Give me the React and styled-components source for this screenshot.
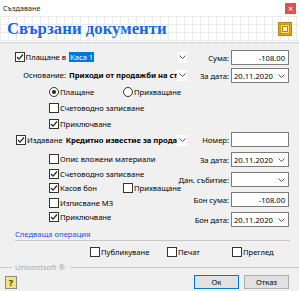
import React from 'react';
import styled, { createGlobalStyle } from 'styled-components';

const GlobalStyle = createGlobalStyle`
  html, body {
    margin: 0;
    padding: 0;
    background: #f0f0f0;
  }
  body {
    font-family: "Noto Sans", "Liberation Sans", sans-serif;
    font-size: 7.6px;
    color: #000;
  }
`;

const Chevron = () => (
  <svg width="7" height="4" viewBox="0 0 7 4">
    <path d="M0.5 0.5 L3.5 3.5 L6.5 0.5" fill="none" stroke="#555" strokeWidth="1" />
  </svg>
);

const Check = ({ checked }) => (
  <CheckBox>
    {checked && (
      <svg width="8" height="8" viewBox="0 0 8 8">
        <path d="M1 4 L3 6.2 L7 1.5" fill="none" stroke="#222" strokeWidth="1.2" />
      </svg>
    )}
  </CheckBox>
);

const CheckItem = ({ checked, children }) => (
  <Item>
    <Check checked={checked} />
    <span>{children}</span>
  </Item>
);

const RadioItem = ({ checked, children }) => (
  <Item>
    <Radio $checked={checked} />
    <span>{children}</span>
  </Item>
);

const DateField = ({ value }) => (
  <Field>
    <span>{value}</span>
    <Chevron />
  </Field>
);

const App = () => {
  return (
    <>
      <GlobalStyle />
      <Window>
        <TitleBar>
          <span>Създаване</span>
          <CloseButton>×</CloseButton>
        </TitleBar>

        <Header>
          <h1>Свързани документи</h1>
          <svg width="14" height="14" viewBox="0 0 14 14">
            <rect x="0.5" y="0.5" width="13" height="13" fill="#dca812" stroke="#b8860b" />
            <rect x="2.5" y="2.5" width="9" height="9" fill="#f7df80" stroke="#c9960c" />
            <rect x="4.5" y="4.5" width="5" height="5" fill="#fff3c0" stroke="#b8860b" />
          </svg>
        </Header>

        <Body>
          <Section>
            <Column>
              <FormGrid>
                <RowLabel>
                  <CheckItem checked>Плащане в</CheckItem>
                </RowLabel>
                <Combo>
                  <ComboText>
                    <Selected>Каса 1</Selected>
                  </ComboText>
                  <ArrowBox>
                    <Chevron />
                  </ArrowBox>
                </Combo>
                <RowLabel>Основание:</RowLabel>
                <Combo>
                  <ComboText $bold>Приходи от продажби на стоки</ComboText>
                  <ArrowBox>
                    <Chevron />
                  </ArrowBox>
                </Combo>
              </FormGrid>
              <Indented $h={16} $top={2}>
                <RadioItem checked>Плащане</RadioItem>
                <RadioItem>Прихващане</RadioItem>
              </Indented>
              <Indented $h={16}>
                <CheckItem>Счетоводно записване</CheckItem>
              </Indented>
              <Indented $h={16}>
                <CheckItem checked>Приключване</CheckItem>
              </Indented>
            </Column>
            <FieldGrid>
              <FieldLabel>Сума:</FieldLabel>
              <Field $right>-108.00</Field>
              <FieldLabel>За дата:</FieldLabel>
              <DateField value="20.11.2020" />
            </FieldGrid>
          </Section>

          <Section>
            <Column>
              <IssueRow>
                <CheckItem checked>Издаване</CheckItem>
                <Combo>
                  <ComboText $bold>Кредитно известие за продажба</ComboText>
                  <ArrowBox>
                    <Chevron />
                  </ArrowBox>
                </Combo>
              </IssueRow>
              <Indented $h={15}>
                <CheckItem>Опис вложени материали</CheckItem>
              </Indented>
              <Indented $h={15}>
                <CheckItem checked>Счетоводно записване</CheckItem>
              </Indented>
              <Indented $h={14}>
                <CheckItem checked>Касов бон</CheckItem>
                <CheckItem>Прихващане</CheckItem>
              </Indented>
              <Indented $h={15}>
                <CheckItem>Изписване МЗ</CheckItem>
              </Indented>
              <Indented $h={14}>
                <CheckItem checked>Приключване</CheckItem>
              </Indented>
            </Column>
            <FieldGrid $gap={5}>
              <FieldLabel>Номер:</FieldLabel>
              <Field />
              <FieldLabel>За дата:</FieldLabel>
              <DateField value="20.11.2020" />
              <FieldLabel>Дан. събитие:</FieldLabel>
              <DateField value="" />
              <FieldLabel>Бон сума:</FieldLabel>
              <Field $right>-108.00</Field>
              <FieldLabel>Бон дата:</FieldLabel>
              <DateField value="20.11.2020" />
            </FieldGrid>
          </Section>

          <NextOperation>Следваща операция</NextOperation>

          <Options>
            <CheckItem>Публикуване</CheckItem>
            <CheckItem>Печат</CheckItem>
            <CheckItem>Преглед</CheckItem>
          </Options>
        </Body>

        <Brand>Unicontsoft ®</Brand>

        <Footer>
          <HelpButton>?</HelpButton>
          <Button $primary>Ок</Button>
          <Button>Отказ</Button>
        </Footer>
      </Window>
    </>
  );
};

export default App;

const Window = styled.div`
  width: 299px;
  height: 291px;
  background: #f0f0f0;
  display: flex;
  flex-direction: column;
  overflow: hidden;
`;

const TitleBar = styled.div`
  height: 16px;
  flex: none;
  background: #fff;
  display: flex;
  align-items: center;
  justify-content: space-between;
  padding: 0 3px;
  font-size: 7.2px;
  color: #222;
`;

const CloseButton = styled.span`
  width: 11px;
  height: 11px;
  background: #d9534f;
  color: #fff;
  font-size: 9px;
  line-height: 11px;
  text-align: center;
`;

const Header = styled.div`
  height: 26px;
  flex: none;
  display: flex;
  align-items: center;
  justify-content: space-between;
  padding: 0 7px;
  background-color: #fff;
  background-image: linear-gradient(#ececec 1px, transparent 1px),
    linear-gradient(90deg, #ececec 1px, transparent 1px);
  background-size: 8px 8px;
  border-bottom: 1px solid #d4d4d4;

  h1 {
    margin: 0;
    font-family: "Liberation Serif", serif;
    font-weight: 700;
    font-size: 16.8px;
    color: #1868de;
  }
`;

const Body = styled.div`
  padding-top: 7px;
  display: flex;
  flex-direction: column;
`;

const Section = styled.div`
  display: grid;
  grid-template-columns: 188px 1fr;
  padding-right: 10px;
`;

const Column = styled.div`
  display: flex;
  flex-direction: column;
  padding-right: 1px;
`;

const FormGrid = styled.div`
  display: grid;
  grid-template-columns: 58px 1fr;
  grid-auto-rows: 14px;
  column-gap: 2px;
  row-gap: 4px;
  padding-left: 8px;
`;

const RowLabel = styled.div`
  display: flex;
  align-items: center;
  justify-content: flex-end;
  white-space: nowrap;
`;

const Combo = styled.div`
  flex: 1;
  min-width: 0;
  height: 14px;
  display: flex;
  align-items: center;
`;

const ComboText = styled.div`
  flex: 1;
  overflow: hidden;
  white-space: nowrap;
  font-weight: ${(p) => (p.$bold ? 700 : 400)};
  padding-left: 1px;
`;

const Selected = styled.span`
  background: #0078d7;
  color: #fff;
  padding: 1px 1px;
`;

const ArrowBox = styled.div`
  width: 10px;
  height: 11px;
  background: #fff;
  display: flex;
  align-items: center;
  justify-content: center;
  flex: none;
`;

const Indented = styled.div`
  height: ${(p) => p.$h}px;
  margin-top: ${(p) => p.$top || 0}px;
  display: grid;
  grid-template-columns: 74px auto;
  align-items: center;
  padding-left: 49px;
`;

const IssueRow = styled.div`
  height: 16px;
  margin-bottom: 3px;
  padding-left: 16px;
  display: flex;
  align-items: center;
  gap: 2px;
`;

const Item = styled.label`
  display: flex;
  align-items: center;
  gap: 1px;
  white-space: nowrap;
`;

const CheckBox = styled.span`
  width: 10px;
  height: 10px;
  box-sizing: border-box;
  border: 1px solid #333;
  background: #fff;
  display: flex;
  align-items: center;
  justify-content: center;
  flex: none;
`;

const Radio = styled.span`
  width: 10px;
  height: 10px;
  box-sizing: border-box;
  border: 1px solid #333;
  border-radius: 50%;
  background: #fff;
  display: flex;
  align-items: center;
  justify-content: center;
  flex: none;

  &::after {
    content: '';
    width: 4px;
    height: 4px;
    border-radius: 50%;
    background: ${(p) => (p.$checked ? '#222' : 'transparent')};
  }
`;

const FieldGrid = styled.div`
  display: grid;
  grid-template-columns: 41px 58px;
  grid-auto-rows: 15px;
  column-gap: 2px;
  row-gap: ${(p) => p.$gap || 3}px;
  align-content: start;
`;

const FieldLabel = styled.div`
  display: flex;
  align-items: center;
  justify-content: flex-end;
  white-space: nowrap;
`;

const Field = styled.div`
  box-sizing: border-box;
  border: 1px solid #7a7a7a;
  background: #fff;
  display: flex;
  align-items: center;
  justify-content: ${(p) => (p.$right ? 'flex-end' : 'space-between')};
  padding: 0 3px 0 2px;
  white-space: nowrap;
`;

const NextOperation = styled.div`
  margin: 2px 9px 0 15px;
  height: 11px;
  border-bottom: 1px solid #c8c8c8;
  color: #2050e0;
  line-height: 10px;
`;

const Options = styled.div`
  height: 15px;
  margin-top: 3px;
  padding-left: 90px;
  display: grid;
  grid-template-columns: 77px 65px auto;
  align-items: center;
`;

const Brand = styled.div`
  margin-top: 2px;
  height: 12px;
  display: flex;
  align-items: center;
  gap: 3px;
  color: #a8a8a8;

  &::before,
  &::after {
    content: '';
    height: 1px;
    background: #c8c8c8;
  }
  &::before {
    width: 12px;
  }
  &::after {
    flex: 1;
    margin-left: 2px;
  }
`;

const Footer = styled.div`
  margin-top: 2px;
  display: flex;
  align-items: center;
  gap: 5px;
  padding: 0 10px 0 5px;
`;

const HelpButton = styled.span`
  width: 12px;
  height: 13px;
  box-sizing: border-box;
  border: 1px solid #8a8a8a;
  background: #f4e27c;
  font-weight: 700;
  font-size: 9px;
  line-height: 11px;
  text-align: center;
  color: #333;
  margin-right: auto;
`;

const Button = styled.button`
  width: 45px;
  height: 14px;
  padding: 0;
  box-sizing: border-box;
  font-family: inherit;
  font-size: 7.6px;
  background: #e1e1e1;
  border: 1px solid ${(p) => (p.$primary ? '#0078d7' : '#adadad')};
  color: #000;
`;
